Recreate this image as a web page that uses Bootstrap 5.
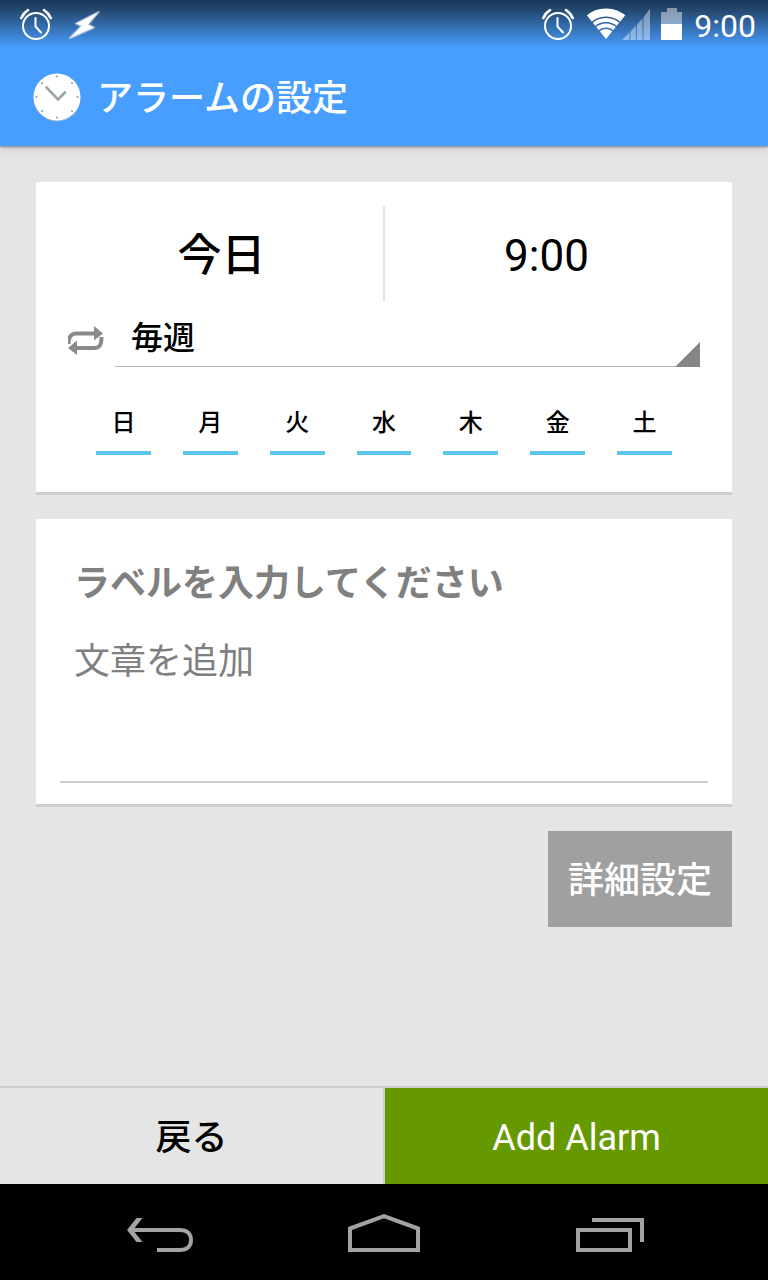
<!DOCTYPE html>
<html lang="ja">
<head>
<meta charset="utf-8">
<meta name="viewport" content="width=device-width, initial-scale=1">
<title>アラームの設定</title>
<link href="https://cdn.jsdelivr.net/npm/bootstrap@5.3.0/dist/css/bootstrap.min.css" rel="stylesheet">
<style>
  body { font-family: Roboto, "Noto Sans CJK JP", sans-serif; background: #e5e5e5; color: #000; font-weight: 400; }
  svg { display: block; flex: none; }
  .app-header { background: linear-gradient(#1b375a 0, #24486f 10px, #489eff 48px); color: #fff; box-shadow: 0 1px 2px rgba(0,0,0,.4), 0 3px 8px rgba(0,0,0,.12); }
  .status-bar { height: 48px; padding: 0 12px 0 20px; }
  .clock-text { font-size: 32px; line-height: 48px; padding-top: 3px; margin-left: 12px; }
  .bolt-icon { margin-left: 16px; }
  .network-icon { margin-left: 12px; }
  .battery-icon { margin-left: 11px; }
  .title-bar { height: 98px; padding: 0 33px; }
  .page-title { font-size: 36px; line-height: 54px; font-weight: 500; padding-top: 4px; }
  .page { padding: 36px; }
  .panel { background: #fff; border: 0; border-bottom: 3px solid #cecece; border-radius: 0; padding: 24px 24px 37px; }
  .panel-note { padding-bottom: 21px; }
  .plain-btn { border: 0; border-radius: 0; background: none; color: #000; padding: 0; flex: 1 1 0; }
  .when-btn { font-size: 44px; line-height: 92px; height: 96px; padding-top: 4px; }
  .day-btn { border-right: 2px solid #e3e3e3; font-weight: 500; }
  .repeat-label { padding-top: 10px; margin-right: 11px; }
  .repeat-select { appearance: none; border: 0; border-bottom: 1px solid #b8b8b8; border-radius: 0; height: 65px; padding: 8px 16px 0; font-size: 32px; font-weight: 500; color: #000; background: none; }
  .corner-mark { right: 8px; bottom: 0; pointer-events: none; }
  .days { margin-top: 24px; padding: 0 20px; }
  .day-toggle { display: block; height: 64px; margin: 0 16px; border-bottom: 4px solid #ccc; padding-top: 4px; font-size: 24px; line-height: 56px; font-weight: 500; text-align: center; cursor: pointer; }
  .btn-check:checked + .day-toggle { border-color: #5bc5ec; }
  .field { border: 0; border-radius: 0; background: none; width: 100%; padding: 14px 14px 10px; font-size: 36px; line-height: 54px; color: #000; display: block; resize: none; outline: 0; }
  .field::placeholder { color: #808080; opacity: 1; }
  .label-field { font-weight: 700; height: 78px; }
  .note-field { height: 162px; border-bottom: 2px solid #cecece; }
  .detail-btn { margin-top: 24px; height: 96px; border: 0; border-radius: 0; background: #a0a0a0; color: #fff; padding: 4px 20px 0; font-size: 36px; font-weight: 500; }
  .actions { border-top: 2px solid #cecece; }
  .actions .plain-btn { height: 96px; font-size: 36px; padding-top: 4px; }
  .actions .back-btn { border-right: 2px solid #cecece; font-weight: 500; }
  .actions .add-btn { background: #669900; color: #fff; }
  .sys-nav { background: #000; height: 96px; padding: 0 48px; }
  .sys-nav .plain-btn { height: 96px; }
</style>
</head>
<body class="d-flex flex-column min-vh-100">
<svg width="0" height="0" class="position-absolute" aria-hidden="true">
  <symbol id="alarm" viewBox="0 0 32 34">
    <g fill="none" stroke="#fff" stroke-linecap="round">
      <circle cx="16" cy="19" r="13" stroke-width="2"/>
      <path d="M15.500 11v8.500l5.500 6" stroke-width="2"/>
      <path d="M1.300 11Q3.500 6 8 3.200M30.700 11Q28.500 6 24 3.200" stroke-width="2.600"/>
    </g>
  </symbol>
</svg>

<header class="app-header">
  <div class="status-bar d-flex align-items-center">
    <svg width="32" height="34"><use href="#alarm"/></svg>
    <svg width="34" height="32" viewBox="0 0 34 32" class="bolt-icon"><path d="M30.500 4 8 15.500l5.500 2.500L2 30 26 19.500 20 16.500Z" fill="#fff" stroke="#fff" stroke-opacity=".45" stroke-width="2.500" stroke-linejoin="round"/></svg>
    <div class="d-flex align-items-center ms-auto">
      <svg width="32" height="34"><use href="#alarm"/></svg>
      <svg width="64" height="34" viewBox="0 0 64 34" class="network-icon">
        <clipPath id="cone"><path d="M20 32-1.500 5.500V0H41.500V5.500Z"/></clipPath>
        <g clip-path="url(#cone)" fill="none" stroke="#fff">
          <circle cx="20" cy="32" r="26.500" stroke-width="8"/>
          <circle cx="20" cy="32" r="19" stroke-width="4"/>
          <circle cx="20" cy="32" r="13.500" stroke-width="4"/>
          <circle cx="20" cy="32" r="5" stroke-width="10"/>
        </g>
        <path fill="#fff" fill-opacity=".42" d="M36 33 43.500 25.500V33ZM44.500 24.500l5.500-6V33H44.500ZM51 17.500l5.500-6V33H51ZM57.500 10.500 64 1.500V33h-6.500Z"/>
      </svg>
      <svg width="21" height="32" viewBox="0 0 21 32" class="battery-icon"><path fill="#fff" fill-opacity=".45" d="M6 0h10v4h5v12H0V4h6Z"/><path fill="#fff" d="M0 16h21v16H0Z"/></svg>
      <span class="clock-text">9:00</span>
    </div>
  </div>
  <div class="title-bar d-flex align-items-center gap-3">
    <svg width="48" height="50" viewBox="0 0 48 50">
      <circle cx="24" cy="26" r="23.500" fill="#8fb4dc"/><circle cx="24" cy="25" r="23.500" fill="#fff"/>
      <path d="M13.500 15.500 25 27.500l7-7" fill="none" stroke="#9aa6a3" stroke-width="2.600" stroke-linecap="round"/>
      <g fill="#8f9b99"><circle cx="24" cy="4.500" r="1"/><circle cx="24" cy="45.500" r="1"/><circle cx="3.500" cy="25" r="1"/><circle cx="44.500" cy="25" r="1"/><circle cx="9" cy="11" r="1"/><circle cx="39" cy="11" r="1"/><circle cx="9" cy="39" r="1"/><circle cx="39" cy="39" r="1"/></g>
    </svg>
    <h1 class="page-title m-0">アラームの設定</h1>
  </div>
</header>

<main class="page flex-grow-1">
  <section class="panel mb-4">
    <div class="d-flex">
      <button type="button" class="plain-btn when-btn day-btn">今日</button>
      <button type="button" class="plain-btn when-btn">9:00</button>
    </div>
    <div class="d-flex align-items-center px-2 position-relative">
      <label for="repeat" aria-label="繰り返し" class="repeat-label">
        <svg width="36" height="30" viewBox="0 0 36 30">
          <path d="M.5 19C.5 10.500 4 8.500 9 8.500H27M33.500 12C33.500 21 31 23 26 23H9" fill="none" stroke="#8a8a8a" stroke-width="4"/>
          <path fill="#8a8a8a" d="M26 1 35 8.500 26 15.500ZM9 15.500V30L0 23Z"/>
        </svg>
      </label>
      <select id="repeat" class="repeat-select flex-grow-1"><option>毎週</option></select>
      <svg width="24" height="25" viewBox="0 0 24 25" class="corner-mark position-absolute"><path d="M24 0V25H0V24Z" fill="#868686"/></svg>
    </div>
    <div class="days row g-0">
      <div class="col"><input type="checkbox" class="btn-check" id="d0" checked><label class="day-toggle" for="d0">日</label></div>
      <div class="col"><input type="checkbox" class="btn-check" id="d1" checked><label class="day-toggle" for="d1">月</label></div>
      <div class="col"><input type="checkbox" class="btn-check" id="d2" checked><label class="day-toggle" for="d2">火</label></div>
      <div class="col"><input type="checkbox" class="btn-check" id="d3" checked><label class="day-toggle" for="d3">水</label></div>
      <div class="col"><input type="checkbox" class="btn-check" id="d4" checked><label class="day-toggle" for="d4">木</label></div>
      <div class="col"><input type="checkbox" class="btn-check" id="d5" checked><label class="day-toggle" for="d5">金</label></div>
      <div class="col"><input type="checkbox" class="btn-check" id="d6" checked><label class="day-toggle" for="d6">土</label></div>
    </div>
  </section>

  <section class="panel panel-note">
    <input type="text" class="field label-field" aria-label="ラベル" placeholder="ラベルを入力してください">
    <textarea class="field note-field" aria-label="文章" placeholder="文章を追加"></textarea>
  </section>

  <div class="d-flex justify-content-end">
    <button type="button" class="detail-btn">詳細設定</button>
  </div>
</main>

<div class="actions d-flex">
  <button type="button" class="plain-btn back-btn">戻る</button>
  <button type="button" class="plain-btn add-btn">Add Alarm</button>
</div>
<nav class="sys-nav d-flex">
  <button type="button" class="plain-btn d-flex align-items-center justify-content-center" aria-label="戻る">
    <svg width="72" height="40" viewBox="0 0 72 40"><path fill="#a3a3a3" d="M12.500 6h6L9 18l9.500 12h-6L3 18Z"/><path d="M7 18H56C63 18 67 22 67 28S63 38 56 38H33" fill="none" stroke="#a3a3a3" stroke-width="4"/></svg>
  </button>
  <button type="button" class="plain-btn d-flex align-items-center justify-content-center" aria-label="ホーム">
    <svg width="72" height="40" viewBox="0 0 72 40"><path d="M2 38V16.500L36 4.200 70 16.500V38Z" fill="none" stroke="#a3a3a3" stroke-width="4"/></svg>
  </button>
  <button type="button" class="plain-btn d-flex align-items-center justify-content-center" aria-label="履歴">
    <svg width="72" height="40" viewBox="0 0 72 40"><path d="M6 18H58V38H6ZM20 8H70V30" fill="none" stroke="#a3a3a3" stroke-width="4"/></svg>
  </button>
</nav>
<script src="https://cdn.jsdelivr.net/npm/bootstrap@5.3.0/dist/js/bootstrap.bundle.min.js"></script>
</body>
</html>
